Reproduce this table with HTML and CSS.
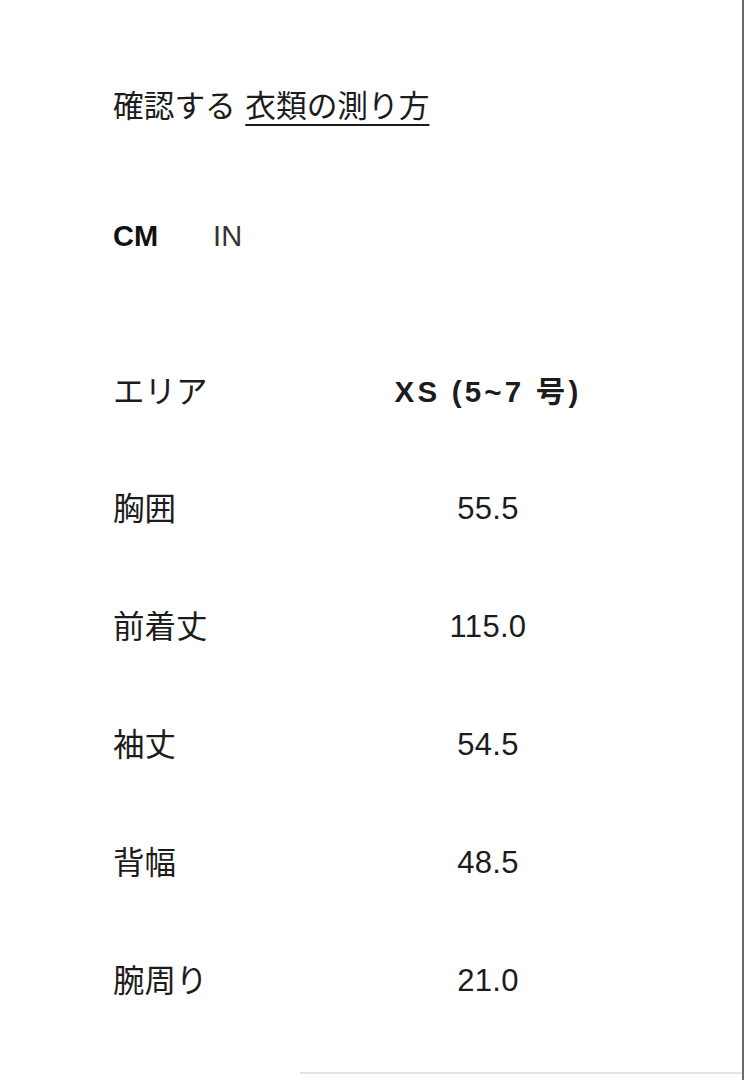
FILE: index.html
```html
<!DOCTYPE html>
<html lang="ja">
<head>
<meta charset="utf-8">
<title>サイズ表</title>
<link rel="stylesheet" href="styles.css">
</head>
<body>
<div class="page">
  <div class="content">
    <p class="title">確認する <a class="link" href="#">衣類の測り方</a></p>
    <div class="units">
      <span class="unit active">CM</span>
      <span class="unit">IN</span>
    </div>
    <div class="table">
      <div class="row head">
        <div class="cell label">エリア</div>
        <div class="cell value">XS (5~7 号)</div>
      </div>
      <div class="row">
        <div class="cell label">胸囲</div>
        <div class="cell value">55.5</div>
      </div>
      <div class="row">
        <div class="cell label">前着丈</div>
        <div class="cell value">115.0</div>
      </div>
      <div class="row">
        <div class="cell label">袖丈</div>
        <div class="cell value">54.5</div>
      </div>
      <div class="row">
        <div class="cell label">背幅</div>
        <div class="cell value">48.5</div>
      </div>
      <div class="row">
        <div class="cell label">腕周り</div>
        <div class="cell value">21.0</div>
      </div>
    </div>
  </div>
  <div class="footer-line"></div>
</div>
</body>
</html>
```
FILE: styles.css
```css
html, body {
  margin: 0;
  padding: 0;
  background: #fff;
}
body {
  font-family: "Liberation Sans", Arial, "Noto Sans CJK JP", sans-serif;
  color: #1c1c1c;
  font-size: 30px;
}
.page {
  width: 744px;
  height: 1080px;
  box-sizing: border-box;
  border-right: 2px solid #6b6b6b;
  display: flex;
  flex-direction: column;
  overflow: hidden;
}
.content {
  flex: 1;
  padding-left: 113px;
}
.title {
  margin: 87px 0 0;
  line-height: 40px;
  font-size: 30.7px;
  word-spacing: 1px;
}
.link {
  color: inherit;
  text-decoration: underline;
  text-decoration-thickness: 2px;
  text-underline-offset: 7px;
}
.units {
  margin-top: 89px;
  display: flex;
  gap: 55px;
  line-height: 40px;
  font-size: 29px;
}
.unit {
  color: #333;
}
.unit.active {
  font-weight: bold;
  color: #111;
}
.table {
  margin-top: 78px;
  display: flex;
  flex-direction: column;
}
.row {
  display: grid;
  grid-template-columns: 280px 190px;
  height: 118px;
  align-items: center;
}
.row.head {
  height: 116px;
}
.cell {
  line-height: 40px;
}
.label {
  font-size: 31.5px;
}
.value {
  text-align: center;
  font-size: 31px;
  letter-spacing: 0.3px;
  white-space: nowrap;
}
.head .value {
  font-weight: bold;
  letter-spacing: 3.2px;
  font-size: 29.5px;
}
.footer-line {
  margin: 0 0 6px 300px;
  height: 2px;
  background: #e4e4e4;
}
```
